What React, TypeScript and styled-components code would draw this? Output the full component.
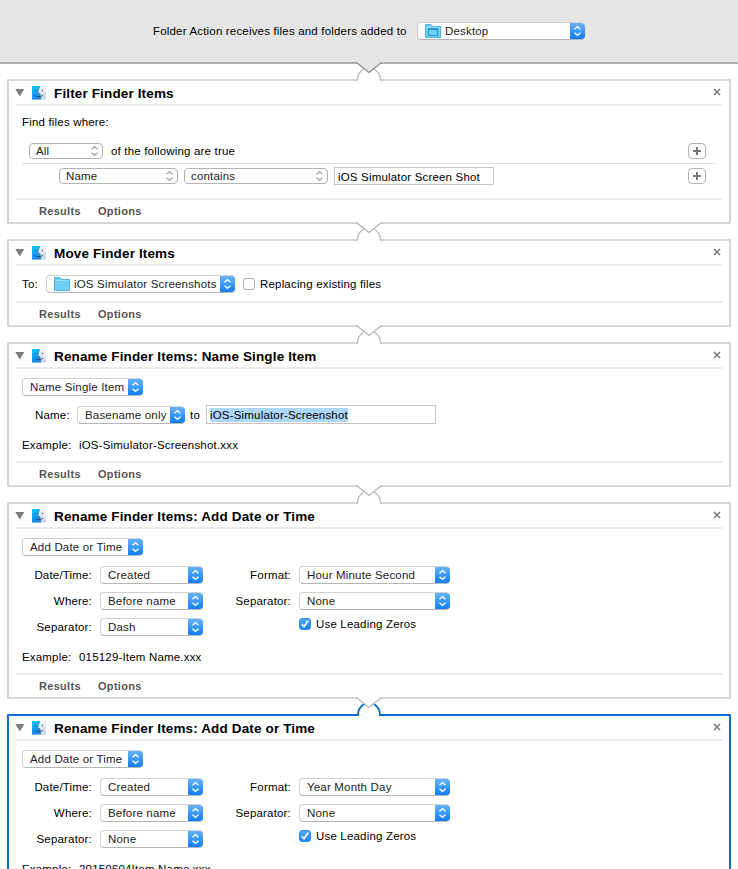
import React from 'react';
import styled, { createGlobalStyle, css } from 'styled-components';

const GlobalStyle = createGlobalStyle`
  *, *::before, *::after { box-sizing: border-box; }
  body {
    margin: 0;
    background: #fff;
    color: #000;
    font: 11.5px/14px 'Liberation Sans', Arial, sans-serif;
    letter-spacing: 0.18px;
    overflow: hidden;
  }
`;

const Page = styled.main`
  height: 869px;
  overflow: hidden;
`;

const TopBar = styled.header`
  height: 64px;
  display: flex;
  padding: 22px 0 0 153px;
  align-items: flex-start;
  background: #e5e5e5;
  border-bottom: 2px solid #b1b1b1;
`;

const Label = styled.span<{ $w?: number; $right?: boolean; $short?: boolean }>`
  flex: none;
  white-space: nowrap;
  line-height: ${p => (p.$short ? 16 : 18)}px;
  ${p => p.$w && css`width: ${p.$w}px;`}
  ${p => p.$right && css`text-align: right;`}
`;

const Popup = styled.div<{ $w: number }>`
  flex: none;
  display: flex;
  width: ${p => p.$w}px;
  height: 18px;
  padding-left: 7px;
  overflow: hidden;
  background: #fff;
  border: 1px solid #d0d0d0;
  border-bottom-color: #b5b5b5;
  border-right: 0;
  border-radius: 4px;
  color: #222;
  line-height: 16px;
  white-space: nowrap;
`;

const PopupText = styled.span`
  flex: 1;
  min-width: 0;
`;

const PopupCap = styled.span`
  flex: none;
  width: 15px;
  height: 18px;
  margin: -1px 0;
  background: linear-gradient(#6cb6fa, #3c99fb 50%, #0a7aff);
`;

const PlainPopup = styled.div<{ $w: number }>`
  flex: none;
  display: flex;
  justify-content: space-between;
  width: ${p => p.$w}px;
  height: 16px;
  padding: 0 2px 0 6px;
  border: 1px solid #b2b2b2;
  border-radius: 4px;
  color: #222;
  line-height: 15px;
`;

const TextInput = styled.div<{ $w: number; $h: number }>`
  flex: none;
  width: ${p => p.$w}px;
  height: ${p => p.$h}px;
  padding: 2px 0 0 3px;
  border: 1px solid #c6c6c6;
  line-height: 14px;
  white-space: nowrap;
`;

const Selection = styled.span`
  display: inline-block;
  height: 14px;
  background: #add6fb;
`;

const Check = styled.span<{ $on?: boolean }>`
  flex: none;
  display: block;
  width: 12px;
  height: 12px;
  border-radius: 3px;
  border: 1px solid ${p => (p.$on ? '#2c8ef5' : '#b0b0b0')};
  background: ${p => (p.$on ? 'linear-gradient(#55a8f8, #1b86fb)' : '#fff')};
  svg { display: block; margin: -1px; }
`;

const AddButton = styled.button`
  flex: none;
  width: 18px;
  height: 16px;
  padding: 0;
  background: #fff;
  border: 1px solid #b2b2b2;
  border-radius: 4px;
  svg { display: block; margin: auto; }
`;

const Panel = styled.section<{ $h: number; $active?: boolean }>`
  display: flex;
  flex-direction: column;
  width: 724px;
  height: ${p => p.$h}px;
  margin-left: 7px;
  padding: 0 7px;
  border: 2px solid ${p => (p.$active ? '#0a6cce' : '#d5d5d5')};
  border-radius: 1px;
`;

const PanelHead = styled.div`
  flex: none;
  display: flex;
  height: 25px;
  padding-right: 1px;
  border-bottom: 2px solid #ebebeb;
`;

const Title = styled.h2`
  flex: 1;
  margin: 5px 0 0 8px;
  font-size: 13.5px;
  line-height: 16px;
  font-weight: bold;
  letter-spacing: 0.14px;
`;

const PanelBody = styled.div`
  flex: 1;
  padding: 0 6px;
`;

const PanelFoot = styled.div`
  flex: none;
  display: flex;
  gap: 17px;
  height: 24px;
  padding: 4px 0 0 23px;
  border-top: 2px solid #ebebeb;
  color: #555;
  font-size: 11px;
  font-weight: bold;
  letter-spacing: 0.3px;
`;

const FootItem = styled.span<{ $w: number }>`
  width: ${p => p.$w}px;
`;

const Row = styled.div<{ $top?: number; $left?: number; $gap?: number; $center?: boolean }>`
  display: flex;
  align-items: ${p => (p.$center ? 'center' : 'flex-start')};
  gap: ${p => p.$gap ?? 0}px;
  padding-top: ${p => p.$top ?? 0}px;
  padding-left: ${p => p.$left ?? 0}px;
`;

const Criterion = styled.div`
  height: 21px;
  width: 694px;
  border-bottom: 1px solid #dedede;
  display: flex;
  justify-content: space-between;
  align-items: flex-start;
  padding: 0 10px 0 7px;
`;

const DateGrid = styled.div`
  display: grid;
  grid-template-columns: 70px 103px 80px 151px;
  grid-auto-rows: 18px;
  column-gap: 8px;
  row-gap: 8px;
  padding-top: 10px;
`;

const CheckRow = styled.div`
  display: flex;
  gap: 5px;
  line-height: 12px;
`;

const Joint = styled.div`
  display: flow-root;
  height: 15px;
  padding-left: 355px;
  svg { display: block; position: relative; margin-top: -2px; overflow: visible; }
`;

function Connector({ active, first }: { active?: boolean; first?: boolean }) {
  const arc = active
    ? 'M1 18H3C3 13 5.5 9 10 6.5M27 18H25C25 13 22.5 9 18 6.5'
    : 'M1 18H2.5C2.5 13 5.5 8.5 10 6.5M27 18H25.5C25.5 13 22.5 8.5 18 6.5';
  return (
    <Joint>
      <svg width="28" height="19" viewBox="0 0 28 19">
        <path d="M2.5 19V17C2.5 11.5 7 6 14 6S25.5 11.5 25.5 17V19Z" fill="#fff" />
        <path d={arc} fill="none" stroke={active ? '#0a6cce' : '#b5b5b5'} strokeWidth={active ? 2 : 1.1} />
        <path d="M2 0V.5L14 10.5L26 .5V0Z" fill={first ? '#e5e5e5' : '#fff'} />
        <path d="M1.5 .5L14 10.5L26.5 .5" fill="none" stroke={first ? '#8e8e8e' : '#b5b5b5'} strokeWidth="1.3" />
      </svg>
    </Joint>
  );
}

function Arrows({ color = '#fff', w = 15, h = 18 }: { color?: string; w?: number; h?: number }) {
  return (
    <svg width={w} height={h} viewBox={`${-w / 2} ${-h / 2} ${w} ${h}`}>
      <path d="M-3 -1.7L0 -4.3L3 -1.7M-3 1.7L0 4.3L3 1.7" fill="none" stroke={color} strokeWidth="1.3" />
    </svg>
  );
}

const FolderSvg = styled.svg`
  flex: none;
  margin: 1px 4px 0 0;
`;

function Folder({ desktop }: { desktop?: boolean }) {
  return (
    <FolderSvg width="16" height="14" viewBox="0 0 16 14">
      <path d="M.5 13.5V.5H6L7.5 2.5H15.5V13.5Z" fill="#6fcdf3" stroke="#4fb4dc" />
      <path d="M1 3.5H15" stroke="#8eddf8" />
      {desktop && <path d="M3.5 4.5H12.5V11.5H3.5ZM3.5 5.5H12.5" fill="#6fcdf3" stroke="#2797cf" />}
    </FolderSvg>
  );
}

const FinderSvg = styled.svg`
  flex: none;
  margin: 5px 0 0 7px;
`;

function Finder() {
  return (
    <FinderSvg width="14" height="14" viewBox="0 0 14 14">
      <defs>
        <linearGradient id="finderLeft" x1="0" y1="0" x2="0" y2="1">
          <stop offset="0" stopColor="#08c4fb" />
          <stop offset="1" stopColor="#1a86ee" />
        </linearGradient>
        <linearGradient id="finderRight" x1="0" y1="0" x2="0" y2="1">
          <stop offset="0" stopColor="#f0f5fa" />
          <stop offset="1" stopColor="#c3d3e4" />
        </linearGradient>
      </defs>
      <rect width="14" height="13.5" fill="url(#finderRight)" />
      <path d="M0 0H8C6.6 2.5 5.8 5 5.8 7.7H8C8 9.7 8.2 11.7 8.8 13.5H0Z" fill="url(#finderLeft)" />
      <path d="M7.8 .5C6.5 2.8 5.8 5 5.8 7.7H8C8 9.7 8.2 11.5 8.8 13.2" fill="none" stroke="#1b4d78" strokeOpacity=".75" strokeWidth=".7" />
      <path d="M3.5 3.8V5.2M10.3 3.8V5.2" stroke="#153b5c" strokeWidth=".9" />
      <path d="M2.8 9C5 11.2 9 11.2 11.2 9" fill="none" stroke="#153b5c" strokeWidth=".8" />
    </FinderSvg>
  );
}

const TriangleSvg = styled.svg`
  flex: none;
  margin: 8px 0 0 -1px;
`;

const CloseSvg = styled.svg`
  flex: none;
  margin: 7px 0 0;
`;

function Select({ w, text, icon }: { w: number; text: string; icon?: React.ReactNode }) {
  return (
    <Popup $w={w}>
      {icon}
      <PopupText>{text}</PopupText>
      <PopupCap><Arrows /></PopupCap>
    </Popup>
  );
}

function PlainSelect({ w, text }: { w: number; text: string }) {
  return (
    <PlainPopup $w={w}>
      <PopupText>{text}</PopupText>
      <Arrows color="#a8a8a8" w={11} h={14} />
    </PlainPopup>
  );
}

function Add() {
  return (
    <AddButton aria-label="Add">
      <svg width="8" height="8" viewBox="0 0 8 8"><path d="M4 0V8M0 4H8" stroke="#777" strokeWidth="2" /></svg>
    </AddButton>
  );
}

function Action({ title, h, active, children }: { title: string; h: number; active?: boolean; children: React.ReactNode }) {
  return (
    <Panel $h={h} $active={active}>
      <PanelHead>
        <TriangleSvg width="10" height="8" viewBox="0 0 10 8"><path d="M.3 0H9.3L4.8 7.5Z" fill="#7d7d7d" /></TriangleSvg>
        <Finder />
        <Title>{title}</Title>
        <CloseSvg width="8" height="8" viewBox="0 0 8 8"><path d="M1 1L7 7M7 1L1 7" stroke="#777" strokeWidth="1.5" /></CloseSvg>
      </PanelHead>
      <PanelBody>{children}</PanelBody>
      <PanelFoot>
        <FootItem $w={42}>Results</FootItem>
        <FootItem $w={44}>Options</FootItem>
      </PanelFoot>
    </Panel>
  );
}

function DateAction({ format, separator, example, active }: { format: string; separator: string; example: string; active?: boolean }) {
  return (
    <Action title="Rename Finder Items: Add Date or Time" h={197} active={active}>
      <Row $top={9}><Select w={121} text="Add Date or Time" /></Row>
      <DateGrid>
        <Label $right>Date/Time:</Label>
        <Select w={103} text="Created" />
        <Label $right>Format:</Label>
        <Select w={151} text={format} />
        <Label $right>Where:</Label>
        <Select w={103} text="Before name" />
        <Label $right>Separator:</Label>
        <Select w={151} text="None" />
        <Label $right>Separator:</Label>
        <Select w={103} text={separator} />
        <span />
        <CheckRow>
          <Check $on>
            <svg width="12" height="12" viewBox="0 0 12 12"><path d="M2.7 6.2L5 8.8L9 2.8" fill="none" stroke="#fff" strokeWidth="1.6" /></svg>
          </Check>
          <span>Use Leading Zeros</span>
        </CheckRow>
      </DateGrid>
      <Row $top={12}>
        <Label $w={57}>Example:</Label>
        <Label>{example}</Label>
      </Row>
    </Action>
  );
}

export default function App() {
  return (
    <Page>
      <GlobalStyle />
      <TopBar>
        <Label $w={264}>Folder Action receives files and folders added to</Label>
        <Select w={168} text="Desktop" icon={<Folder desktop />} />
      </TopBar>
      <Connector first />
      <Action title="Filter Finder Items" h={145}>
        <Row $top={7}><Label>Find files where:</Label></Row>
        <Row $top={12}>
          <Criterion>
            <Row $gap={8}>
              <PlainSelect w={74} text="All" />
              <Label $short>of the following are true</Label>
            </Row>
            <Add />
          </Criterion>
        </Row>
        <Row $top={3} $left={37}>
          <Row $top={1} $gap={6}>
            <PlainSelect w={119} text="Name" />
            <PlainSelect w={144} text="contains" />
          </Row>
          <Row $left={6}><TextInput $w={160} $h={18}>iOS Simulator Screen Shot</TextInput></Row>
          <Row $top={1} $left={194}><Add /></Row>
        </Row>
      </Action>
      <Connector />
      <Action title="Move Finder Items" h={88}>
        <Row $top={9} $center>
          <Label $w={24}>To:</Label>
          <Select w={189} text="iOS Simulator Screenshots" icon={<Folder />} />
          <Row $left={8} $gap={5} $center><Check /><Label>Replacing existing files</Label></Row>
        </Row>
      </Action>
      <Connector />
      <Action title="Rename Finder Items: Name Single Item" h={145}>
        <Row $top={9}><Select w={121} text="Name Single Item" /></Row>
        <Row $top={9}>
          <Row $top={1} $left={13}>
            <Label $w={42}>Name:</Label>
            <Select w={108} text="Basename only" />
            <Row $left={5}><Label $w={16}>to</Label></Row>
          </Row>
          <TextInput $w={230} $h={19}><Selection>iOS-Simulator-Screenshot</Selection></TextInput>
        </Row>
        <Row $top={12}>
          <Label $w={57}>Example:</Label>
          <Label>iOS-Simulator-Screenshot.xxx</Label>
        </Row>
      </Action>
      <Connector />
      <DateAction format="Hour Minute Second" separator="Dash" example="015129-Item Name.xxx" />
      <Connector active />
      <DateAction format="Year Month Day" separator="None" example="20150604Item Name.xxx" active />
    </Page>
  );
}
